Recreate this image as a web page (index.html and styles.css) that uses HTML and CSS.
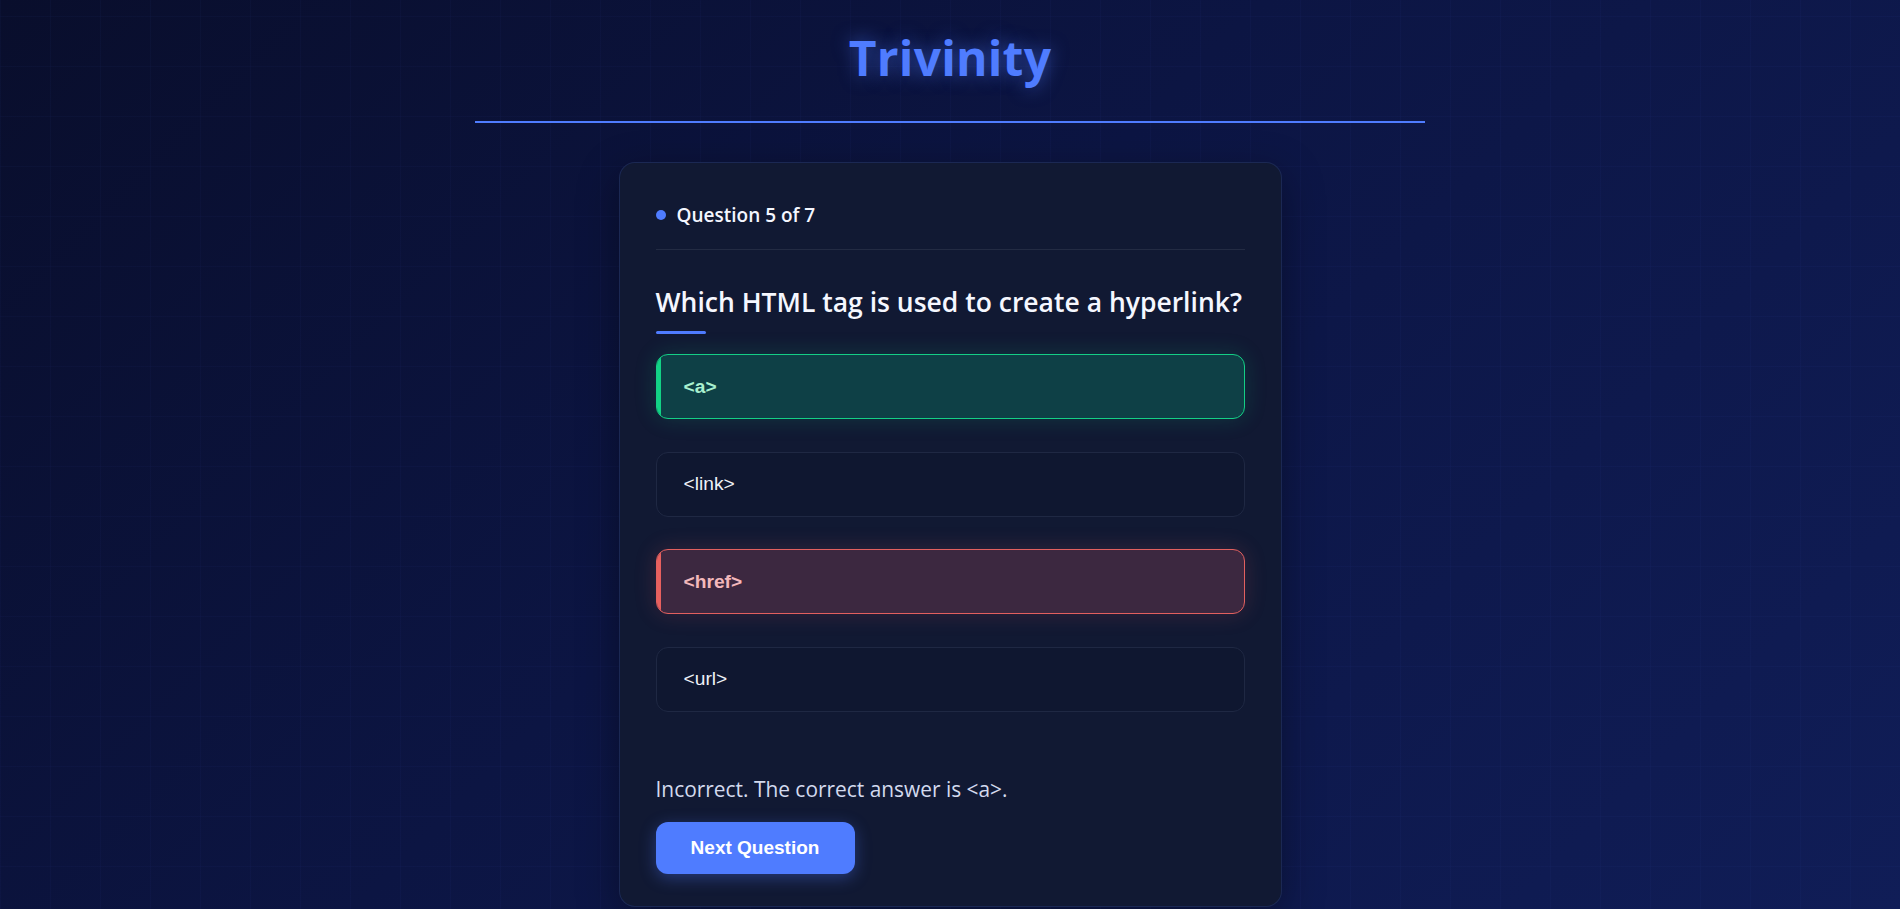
FILE: index.html
```html
<!DOCTYPE html>
<html lang="en">
<head>
<meta charset="utf-8">
<title>Trivinity</title>
<link rel="stylesheet" href="styles.css">
</head>
<body>
<div class="app">
  <header class="site-header">
    <h1 class="logo">Trivinity</h1>
  </header>
  <main class="card">
    <div class="card-head">
      <span class="dot"></span>
      <span class="counter">Question 5 of 7</span>
    </div>
    <h2 class="question">Which HTML tag is used to create a hyperlink?</h2>
    <div class="q-bar"></div>
    <div class="options">
      <button class="option correct">&lt;a&gt;</button>
      <button class="option">&lt;link&gt;</button>
      <button class="option wrong">&lt;href&gt;</button>
      <button class="option">&lt;url&gt;</button>
    </div>
    <p class="feedback">Incorrect. The correct answer is &lt;a&gt;.</p>
    <button class="next-btn">Next Question</button>
  </main>
</div>
</body>
</html>
```
FILE: styles.css
```css
* { box-sizing: border-box; }

html, body { margin: 0; padding: 0; }

body {
  min-height: 100vh;
  font-family: "Open Sans", "Noto Sans", sans-serif;
  color: #f1f4ff;
  background-color: #0c1440;
  background-image:
    linear-gradient(rgba(79, 124, 255, 0.03) 1px, transparent 1px),
    linear-gradient(90deg, rgba(79, 124, 255, 0.03) 1px, transparent 1px),
    linear-gradient(135deg, #090e2c 0%, #0c1543 45%, #101d57 100%);
  background-size: 50px 50px, 50px 50px, 100% 100%;
  background-position: 0 16px, 0 0, 0 0;
  overflow: hidden;
}

.app {
  width: 950px;
  margin: 0 auto;
}

.site-header {
  height: 123px;
  border-bottom: 2px solid #4f7cff;
  display: flex;
  justify-content: center;
  padding-top: 25px;
}

.logo {
  margin: 0;
  font-size: 48px;
  line-height: 66px;
  font-weight: 700;
  color: #4f7cff;
  text-shadow: 0 0 18px rgba(79, 124, 255, 0.55);
  letter-spacing: 0.2px;
}

.card {
  width: 663px;
  margin: 39px auto 0;
  padding: 39px 36px 32px;
  background: #111933;
  border: 1px solid rgba(79, 124, 255, 0.16);
  border-radius: 16px;
  box-shadow: 0 12px 40px rgba(0, 0, 0, 0.35);
}

.card-head {
  display: flex;
  align-items: center;
  gap: 11px;
  height: 26px;
  box-sizing: content-box;
  padding-bottom: 21px;
  border-bottom: 1px solid rgba(255, 255, 255, 0.08);
}

.dot {
  width: 10px;
  height: 10px;
  border-radius: 50%;
  background: #4f7cff;
}

.counter {
  font-size: 19px;
  font-weight: 600;
  color: #f4f6ff;
}

.question {
  margin: 34px 0 0;
  font-size: 26.5px;
  line-height: 36px;
  font-weight: 600;
  color: #f5f7ff;
  white-space: nowrap;
}

.q-bar {
  width: 50px;
  height: 3px;
  margin-top: 11px;
  background: #4f7cff;
  border-radius: 2px;
}

.options {
  margin-top: 20px;
  display: flex;
  flex-direction: column;
  gap: 32.5px;
}

.option {
  position: relative;
  display: flex;
  align-items: center;
  height: 65px;
  padding: 0 27px;
  text-align: left;
  font-family: "Liberation Sans", Arial, sans-serif;
  font-size: 19.2px;
  color: #eef1f8;
  background: #0f1730;
  border: 1px solid #1f2843;
  border-radius: 12px;
  overflow: hidden;
}

.option.correct {
  background: #0e4046;
  border-color: #14cf86;
  color: #a8f0cf;
  font-weight: 700;
  box-shadow: 0 0 22px rgba(16, 200, 130, 0.18);
}

.option.wrong {
  background: #3c2840;
  border-color: #e2605f;
  color: #f3b8bb;
  font-weight: 700;
  box-shadow: 0 0 22px rgba(226, 96, 95, 0.18);
}

.option.correct::before,
.option.wrong::before {
  content: "";
  position: absolute;
  left: 0;
  top: 0;
  bottom: 0;
  width: 4px;
}

.option.correct::before { background: #12d385; }
.option.wrong::before { background: #e8605e; }

.feedback {
  margin: 63px 0 0;
  font-size: 20.9px;
  line-height: 28px;
  color: #d3daee;
}

.next-btn {
  display: block;
  margin-top: 19px;
  width: 199px;
  height: 52px;
  border: none;
  border-radius: 12px;
  background: #4f7cff;
  color: #ffffff;
  font-family: "Liberation Sans", Arial, sans-serif;
  font-size: 19px;
  font-weight: 700;
  box-shadow: 0 4px 16px rgba(79, 124, 255, 0.35);
}
```
